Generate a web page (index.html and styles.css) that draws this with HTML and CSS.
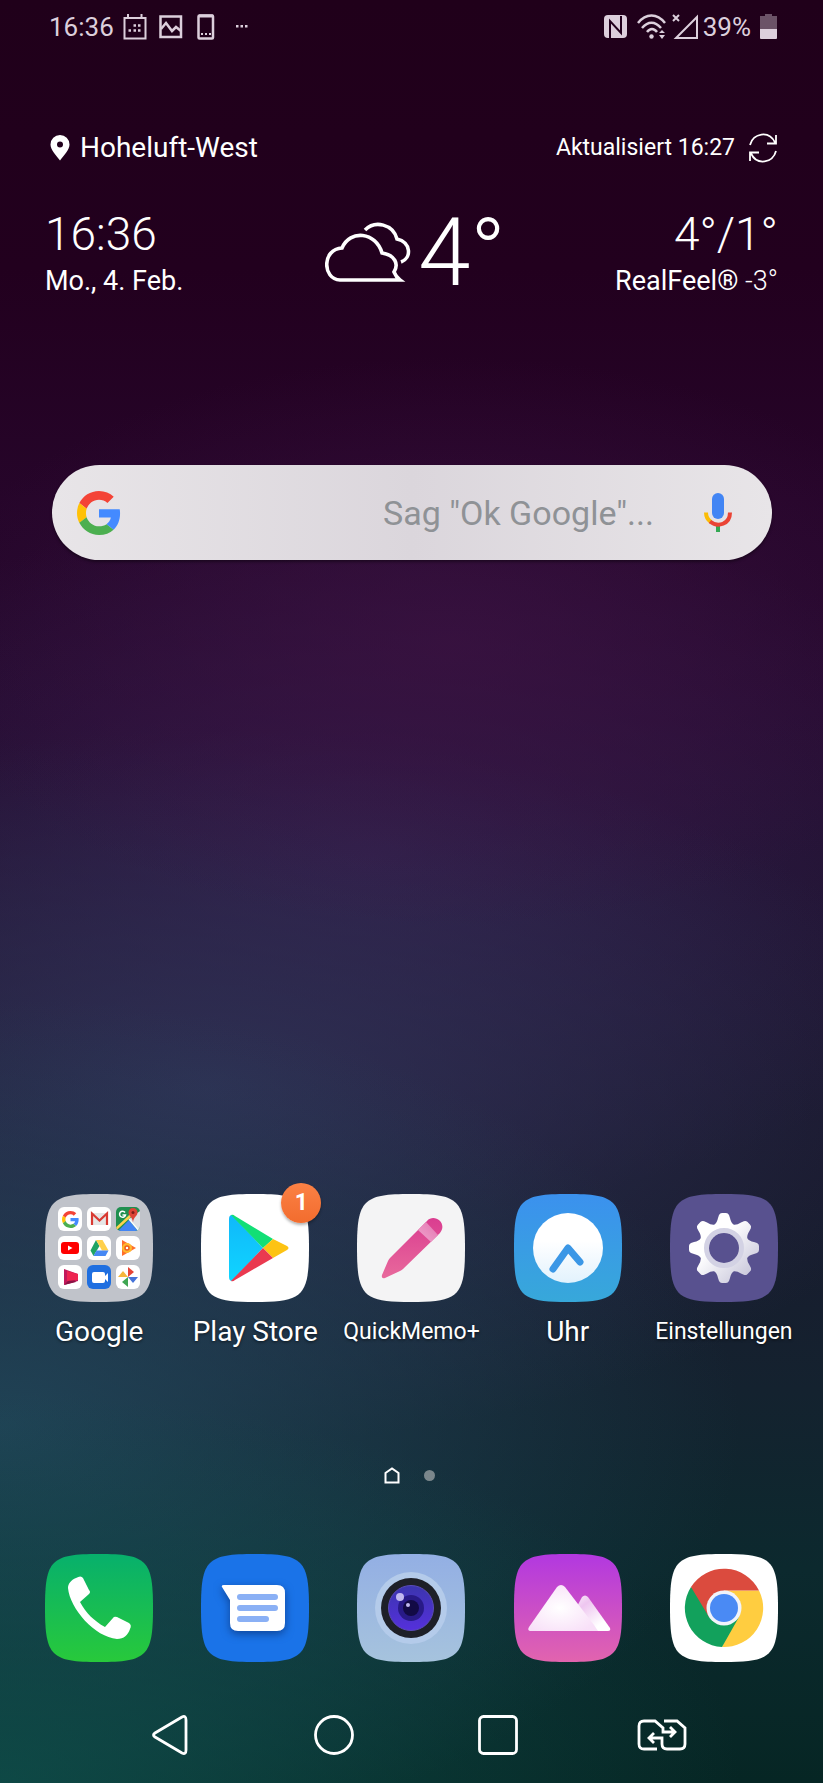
FILE: index.html
```html
<!DOCTYPE html>
<html lang="de">
<head>
    <meta charset="UTF-8">
    <meta name="viewport" content="width=device-width, initial-scale=1.0">
    <title>Startbildschirm</title>
    <link rel="stylesheet" href="styles.css">
</head>
<body>
<!-- Shared shapes -->
<svg class="defs" aria-hidden="true">
    <symbol id="tile" viewBox="0 0 108 108">
        <path d="M54 0C102 0 108 6 108 54S102 108 54 108 0 102 0 54 6 0 54 0Z"/>
    </symbol>
    <symbol id="google-g" viewBox="0 0 48 48">
        <path fill="#f44336" d="M24 9.5c3.54 0 6.71 1.22 9.21 3.6l6.85-6.85C35.9 2.38 30.47 0 24 0 14.62 0 6.51 5.38 2.56 13.22l7.98 6.19C12.43 13.72 17.74 9.5 24 9.5z"/>
        <path fill="#448aff" d="M46.98 24.55c0-1.57-.15-3.09-.38-4.55H24v9.02h12.94c-.58 2.96-2.26 5.48-4.78 7.18l7.73 6c4.51-4.18 7.09-10.36 7.09-17.65z"/>
        <path fill="#ffc107" d="M10.53 28.59c-.48-1.45-.76-2.99-.76-4.59s.27-3.14.76-4.59l-7.98-6.19C.92 16.46 0 20.12 0 24c0 3.88.92 7.54 2.56 10.78l7.97-6.19z"/>
        <path fill="#4caf50" d="M24 48c6.48 0 11.93-2.13 15.89-5.81l-7.73-6c-2.15 1.45-4.92 2.3-8.16 2.3-6.26 0-11.57-4.22-13.47-9.91l-7.98 6.19C6.51 42.62 14.62 48 24 48z"/>
    </symbol>
</svg>

<div class="screen">
    <header class="status-bar">
        <div class="status-left">
            <span>16:36</span>
            <svg class="calendar" width="24" height="26" viewBox="0 0 24 26" fill="none" stroke="currentColor" stroke-width="2">
                <path d="M1.500 4h21v20.500h-21zM5 0v4M18.500 0v4"/>
                <path stroke-width="2.500" d="M10.500 11.500h2.500M15 11.500h2.500M5.500 16.500h2.500M10.500 16.500h2.500M15 16.500h2.500"/>
            </svg>
            <svg class="picture" width="24" height="24" viewBox="0 0 24 24" fill="none" stroke="currentColor" stroke-width="2.500">
                <path d="M1.500 1.500h20.500v20.500H1.500z"/>
                <path d="M2 14l5-6 6 8 4-4 5 4"/>
            </svg>
            <svg class="phone-icon" width="18" height="26" viewBox="0 0 18 26" fill="none" stroke="currentColor">
                <rect x="1.500" y="1.500" width="14.500" height="23" rx="1" stroke-width="2.500"/>
                <path stroke-width="3" d="M2 2h14"/>
                <path stroke-width="2" d="M4 20h2M8 20h2M12 20h2"/>
            </svg>
            <svg class="more" width="12" height="4" viewBox="0 0 12 4" fill="currentColor">
                <path d="M0 0h2.500v2.500H0zM4.500 0H7v2.500H4.500zM9 0h2.500v2.500H9z"/>
            </svg>
        </div>
        <div class="status-right">
            <svg class="nfc" width="24" height="24" viewBox="0 0 24 24">
                <rect width="23" height="23" rx="4" fill="currentColor"/>
                <path d="M6 23V6l11 12V1" fill="none" stroke="#21001c" stroke-width="2"/>
            </svg>
            <svg width="30" height="26" viewBox="0 0 30 26" fill="none" stroke="currentColor" stroke-width="2.500">
                <path d="M1 9C9-1 20-1 28 9M5 14c6-7 13-7 19 0M10 18c3-4 7-4 10 0"/>
                <circle cx="14.500" cy="22.500" r="2.200" fill="currentColor" stroke="none"/>
                <path d="M22 19l3-3 3 3zM22 21l3 4 3-4z" fill="currentColor" stroke="none"/>
            </svg>
            <svg width="28" height="26" viewBox="0 0 28 26" fill="none" stroke="currentColor" stroke-width="2">
                <path d="M26 3v21H5zM2 1l6 6M8 1L2 7"/>
            </svg>
            <span>39%</span>
            <svg class="battery" width="18" height="26" viewBox="0 0 18 26" fill="currentColor">
                <path opacity=".4" d="M5 0h7v2h5v13H0V2h5z"/>
                <path d="M0 15h17v9a1 1 0 0 1-1 1H1a1 1 0 0 1-1-1z"/>
            </svg>
        </div>
    </header>

    <section class="weather">
        <div class="weather-top">
            <div class="location">
                <svg width="20" height="26" viewBox="0 0 20 26" fill="#fff">
                    <path fill-rule="evenodd" d="M10 0a9.500 9.500 0 0 1 9.500 9.500C19.500 15 14 20 10 25.500 6 20 .5 15 .5 9.500A9.500 9.500 0 0 1 10 0zm0 6.500a3 3 0 1 0 0 6 3 3 0 0 0 0-6z"/>
                </svg>
                <span>Hoheluft-West</span>
            </div>
            <div class="updated">
                <span>Aktualisiert 16:27</span>
                <button class="icon-button" aria-label="Aktualisieren">
                    <svg width="30" height="30" viewBox="0 0 30 30" fill="none" stroke="#fff" stroke-width="1.800">
                        <path d="M2 12C5 0 21-3 27 9.500M28 2v8.500h-9M28 18C25 30 9 33 3 20.500M2 28v-8.500h9"/>
                    </svg>
                </button>
            </div>
        </div>
        <div class="weather-main">
            <div class="clock">
                <div class="light">16:36</div>
                <div class="sub">Mo., 4. Feb.</div>
            </div>
            <div class="current">
                <svg width="86" height="62" viewBox="0 0 86 62" fill="none" stroke="#fff" stroke-width="3.600">
                    <path d="M15 58C-3 57-3 27 17 26C25 7 51 10 57 31C70 33 74 42 69 50Q71 55 75 58Z"/>
                    <path d="M40 8C50-2 68 2 72 17C86 20 87 36 76 40"/>
                </svg>
                <span class="temp">4°</span>
            </div>
            <div class="range">
                <div class="light">4°/1°</div>
                <div class="sub">RealFeel® <span class="feel">-3°</span></div>
            </div>
        </div>
    </section>

    <form class="search">
        <svg width="44" height="44" aria-hidden="true"><use href="#google-g"/></svg>
        <input type="text" placeholder='Sag "Ok Google"...' aria-label="Google Suche">
        <button type="button" class="icon-button" aria-label="Sprachsuche">
            <svg width="28" height="42" viewBox="0 0 28 42" fill="none" stroke-width="4">
                <rect x="8" y="1" width="12" height="26" rx="6" fill="#4285f4"/>
                <path stroke="#34a853" d="M14 33v7"/>
                <path stroke="#fbbc05" d="M2 20.500C2 25 4 28 7 30"/>
                <path stroke="#ea4335" d="M6 29.500C14 36 26 32 26 20.500"/>
            </svg>
        </button>
    </form>

    <main class="apps">
        <a href="#" class="app">
            <svg class="app-icon" viewBox="0 0 108 108">
                <use href="#tile" fill="#c0c3ca"/>
                <g fill="#fff">
                    <rect x="13" y="13" width="24" height="24" rx="6"/>
                    <rect x="42" y="13" width="24" height="24" rx="6"/>
                    <rect x="13" y="42" width="24" height="24" rx="6"/>
                    <rect x="42" y="42" width="24" height="24" rx="6"/>
                    <rect x="71" y="42" width="24" height="24" rx="6"/>
                    <rect x="13" y="71" width="24" height="24" rx="6"/>
                    <rect x="71" y="71" width="24" height="24" rx="6"/>
                </g>
                <use href="#google-g" x="17" y="17" width="17" height="17"/>
                <!-- Gmail -->
                <path fill="#e6e6e6" d="M46 19h16v12H46z"/>
                <path fill="none" stroke="#d93a32" stroke-width="2.200" d="M47 31V19.500l7.500 7 7.500-7V31"/>
                <!-- Maps -->
                <clipPath id="maps-clip"><rect x="71" y="13" width="24" height="24" rx="5"/></clipPath>
                <g clip-path="url(#maps-clip)">
                    <path fill="#1f8f4f" d="M71 13h24v24H71z"/>
                    <path fill="#dfe1e4" d="M84 25l11-8v20z"/>
                    <path fill="#4285f4" d="M73 37l11-11 9 11z"/>
                    <path stroke="#fdd34d" stroke-width="2.500" d="M70 36l14-13 4-4"/>
                    <path stroke="#fff" stroke-width="1.500" d="M84 25l11 13"/>
                    <path fill="none" stroke="#fff" stroke-width="1.500" d="M80 18.500a3 3 0 1 0 .5 2.500h-3"/>
                </g>
                <path fill="#dc4437" d="M88 14a4.500 4.500 0 0 1 4.500 4.500c0 4-4 4-4.500 10-.5-6-4.500-6-4.500-10A4.500 4.500 0 0 1 88 14z"/>
                <circle cx="88" cy="18.500" r="1.500" fill="#7d1e18"/>
                <!-- YouTube -->
                <rect x="16" y="48" width="18" height="12" rx="3" fill="#f00"/>
                <path fill="#fff" d="M23 51.500v5l4.500-2.500z"/>
                <!-- Drive -->
                <path fill="#1fa463" d="M51 46l3.500 6-6 10-3-5.500z"/>
                <path fill="#ffd04b" d="M51 46h6.500l6 10.500H57z"/>
                <path fill="#4688f4" d="M51.500 56.500h12l-3 5.500h-12z"/>
                <!-- Play Music -->
                <path fill="#ff6f2c" d="M77 46l14 8-14 8z"/>
                <circle cx="82" cy="54" r="5" fill="#ffb92e"/>
                <circle cx="82" cy="54" r="2" fill="#fff" stroke="#ef5b1e" stroke-width="1.500"/>
                <!-- Play Movies -->
                <path fill="#c2185b" d="M19 75l14 5v7l-14 4z"/>
                <path fill="#8a1245" d="M19 91l8-8 4 5z"/>
                <path fill="#ee2450" d="M22 77l11 3v6l-11 1z"/>
                <!-- Duo -->
                <rect x="42" y="71" width="24" height="24" rx="6" fill="#1f6fe0"/>
                <path fill="#fff" d="M49 78h9a2 2 0 0 1 2 2v2l3-3v9l-3-3v2a2 2 0 0 1-2 2h-9a2 2 0 0 1-2-2v-7a2 2 0 0 1 2-2z"/>
                <!-- Photos -->
                <path fill="#e54435" d="M83 73l6 5-6 5z"/>
                <path fill="#4472d8" d="M83 83h10l-5 6z"/>
                <path fill="#3fa652" d="M83 83v10l-6-5z"/>
                <path fill="#f6b73c" d="M83 83H73l5-6z"/>
            </svg>
            <span class="label">Google</span>
        </a>
        <a href="#" class="app">
            <svg class="app-icon" viewBox="0 0 108 108">
                <defs>
                    <linearGradient id="play-blue" x1="0" y1="0" x2="0" y2="1">
                        <stop offset="0" stop-color="#10b8fa"/>
                        <stop offset="1" stop-color="#10d5ff"/>
                    </linearGradient>
                </defs>
                <use href="#tile" fill="#fff"/>
                <path fill="url(#play-blue)" d="M31 21Q28 21 28 25V83Q28 87 31 87L62 54Z"/>
                <path fill="#12df76" d="M30 21Q32 20 34 22L72 45 62 54Z"/>
                <path fill="#fdc313" d="M72 45L86 52Q89 54 86 56L72 64 62 54Z"/>
                <path fill="#ea3a50" d="M30 87Q32 88 34 86L72 64 62 54Z"/>
            </svg>
            <span class="badge">1</span>
            <span class="label">Play Store</span>
        </a>
        <a href="#" class="app">
            <svg class="app-icon" viewBox="0 0 108 108">
                <defs>
                    <linearGradient id="pen" x1="0" y1="0" x2="0" y2="1">
                        <stop offset="0" stop-color="#da3d90"/>
                        <stop offset="1" stop-color="#e8699c"/>
                    </linearGradient>
                    <linearGradient id="pen-band" x1="1" y1="0" x2="0" y2="1">
                        <stop offset="0" stop-color="#e275b1"/>
                        <stop offset="1" stop-color="#f0a5cd"/>
                    </linearGradient>
                </defs>
                <use href="#tile" fill="#f4f4f5"/>
                <path fill="url(#pen)" d="M70 27C77 19 91 29 83 39L46 75Q45 76 43 77L28 84Q24 85 25 81L31 67Q32 65 33 64Z"/>
                <path fill="url(#pen-band)" d="M69 28L81 41 74 48 61 36Z"/>
            </svg>
            <span class="label label-long">QuickMemo+</span>
        </a>
        <a href="#" class="app">
            <svg class="app-icon" viewBox="0 0 108 108">
                <defs>
                    <linearGradient id="uhr-bg" x1="0" y1="0" x2="0" y2="1">
                        <stop offset="0" stop-color="#3b91ee"/>
                        <stop offset="1" stop-color="#37a8da"/>
                    </linearGradient>
                    <linearGradient id="uhr-face" x1="0" y1="0" x2="0" y2="1">
                        <stop offset=".4" stop-color="#fff"/>
                        <stop offset="1" stop-color="#e2f2fd"/>
                    </linearGradient>
                </defs>
                <use href="#tile" fill="url(#uhr-bg)"/>
                <circle cx="54" cy="54" r="35" fill="url(#uhr-face)"/>
                <path d="M39 75L54 54 66 68" fill="none" stroke="#3b97e6" stroke-width="7" stroke-linecap="round" stroke-linejoin="round"/>
            </svg>
            <span class="label">Uhr</span>
        </a>
        <a href="#" class="app">
            <svg class="app-icon" viewBox="0 0 108 108">
                <defs>
                    <linearGradient id="gear-fill" x1="0" y1="0" x2="1" y2="1">
                        <stop offset=".4" stop-color="#fff"/>
                        <stop offset="1" stop-color="#bcbad2"/>
                    </linearGradient>
                    <path id="tooth" d="M44 31Q47 29 48 24L49 21Q50 19 52 19H56Q58 19 59 21L60 24Q61 29 64 31L54 54Z"/>
                    <mask id="gear">
                        <g fill="#fff">
                            <circle cx="54" cy="54" r="24"/>
                            <use href="#tooth"/>
                            <use href="#tooth" transform="rotate(45 54 54)"/>
                            <use href="#tooth" transform="rotate(90 54 54)"/>
                            <use href="#tooth" transform="rotate(135 54 54)"/>
                            <use href="#tooth" transform="rotate(180 54 54)"/>
                            <use href="#tooth" transform="rotate(225 54 54)"/>
                            <use href="#tooth" transform="rotate(270 54 54)"/>
                            <use href="#tooth" transform="rotate(315 54 54)"/>
                        </g>
                        <circle cx="54" cy="54" r="15" fill="#000"/>
                    </mask>
                </defs>
                <use href="#tile" fill="#58518f"/>
                <g mask="url(#gear)">
                    <path fill="url(#gear-fill)" d="M19 19h70v70H19z"/>
                    <circle cx="54" cy="54" r="17.500" fill="none" stroke="#d3d2e4" stroke-width="5"/>
                </g>
            </svg>
            <span class="label label-long">Einstellungen</span>
        </a>
    </main>

    <div class="pages">
        <svg width="16" height="17" viewBox="0 0 16 17" fill="none" stroke="#fff" stroke-width="2">
            <path d="M1.500 15.500V6L8 1.500 14.500 6v9.500z"/>
        </svg>
        <span class="dot"></span>
    </div>

    <section class="dock">
        <a href="#" class="app" aria-label="Telefon">
            <svg class="app-icon" viewBox="0 0 108 108">
                <defs>
                    <linearGradient id="phone-bg" x1="0" y1="0" x2="0" y2="1">
                        <stop offset="0" stop-color="#07b06c"/>
                        <stop offset="1" stop-color="#28c93b"/>
                    </linearGradient>
                </defs>
                <use href="#tile" fill="url(#phone-bg)"/>
                <path fill="#fff" d="M31 24Q36 21 38 24L44 36Q46 38 44 40L35 48C41 59 49 67 60 73L68 64Q69 62 72 63L84 69Q87 71 85 75C83 81 79 85 72 85C50 83 25 55 23 34C23 30 26 26 31 24Z"/>
            </svg>
        </a>
        <a href="#" class="app" aria-label="Nachrichten">
            <svg class="app-icon" viewBox="0 0 108 108">
                <use href="#tile" fill="#1a73e8"/>
                <path class="bubble" fill="#fff" d="M23 31H76Q84 31 84 39V69Q84 77 76 77H37Q29 77 29 69V46L21 33Q20 31 23 31Z"/>
                <path fill="none" stroke="#8ab0f5" stroke-width="6" stroke-linecap="round" d="M39 43H74M39 54H74M39 65H65"/>
            </svg>
        </a>
        <a href="#" class="app" aria-label="Kamera">
            <svg class="app-icon" viewBox="0 0 108 108">
                <defs>
                    <linearGradient id="cam-bg" x1="0" y1="0" x2="0" y2="1">
                        <stop offset="0" stop-color="#93afe4"/>
                        <stop offset="1" stop-color="#a6c3dd"/>
                    </linearGradient>
                    <linearGradient id="lens" x1="0" y1="0" x2="0" y2="1">
                        <stop offset="0" stop-color="#3b35ae"/>
                        <stop offset="1" stop-color="#5530dc"/>
                    </linearGradient>
                </defs>
                <use href="#tile" fill="url(#cam-bg)"/>
                <circle cx="54" cy="54" r="36" fill="#b4cbea"/>
                <circle cx="54" cy="54" r="30" fill="#1e2028"/>
                <circle cx="54" cy="54" r="22.500" fill="url(#lens)" stroke="#5a4bb8"/>
                <circle cx="54" cy="54" r="13" fill="#281a87"/>
                <circle cx="54" cy="54" r="8" fill="#120a45"/>
                <circle cx="43" cy="43" r="4" fill="#c1b9f0"/>
                <circle cx="51" cy="51" r="2" fill="#c1b9f0"/>
            </svg>
        </a>
        <a href="#" class="app" aria-label="Galerie">
            <svg class="app-icon" viewBox="0 0 108 108">
                <defs>
                    <linearGradient id="gal-bg" x1="0" y1="0" x2="0" y2="1">
                        <stop offset="0" stop-color="#b238e0"/>
                        <stop offset="1" stop-color="#e264ae"/>
                    </linearGradient>
                    <linearGradient id="peak" x1="0" y1="0" x2="1" y2="1">
                        <stop offset="0" stop-color="#fff"/>
                        <stop offset=".35" stop-color="#eec6f0"/>
                        <stop offset=".8" stop-color="#fff"/>
                    </linearGradient>
                    <radialGradient id="mountain" cx=".45" cy=".5" r=".6">
                        <stop offset="0" stop-color="#fff"/>
                        <stop offset="1" stop-color="#f8e0f8"/>
                    </radialGradient>
                </defs>
                <use href="#tile" fill="url(#gal-bg)"/>
                <path fill="url(#peak)" d="M50 77L68 43Q71 40 74 43L96 74Q97 77 94 77Z"/>
                <path fill="url(#mountain)" d="M16 77Q13 76 15 73L43 33Q47 29 51 33L80 71 84 77Z"/>
            </svg>
        </a>
        <a href="#" class="app" aria-label="Chrome">
            <svg class="app-icon" viewBox="0 0 108 108">
                <use href="#tile" fill="#fff"/>
                <path fill="#ffcd40" d="M54 36.500H89A39 39 0 0 1 52 93L69 54Z"/>
                <path fill="#12a15c" d="M54 54L69 63 52 93A39 39 0 0 1 21 33Z"/>
                <path fill="#db4b3e" d="M39 63L21 33A39 39 0 0 1 89 36.500H54Z"/>
                <circle cx="54" cy="54" r="17.500" fill="#f1f3fa"/>
                <circle cx="54" cy="54" r="14" fill="#4a8af4"/>
            </svg>
        </a>
    </section>

    <nav class="nav-bar">
        <button class="icon-button" aria-label="Zurück">
            <svg width="42" height="42" viewBox="0 0 42 42" fill="none" stroke="#fff" stroke-width="2.800">
                <path d="M33 3Q37 1 37 6V36Q37 41 33 39L6 23Q3 21 6 19Z"/>
            </svg>
        </button>
        <button class="icon-button" aria-label="Startseite">
            <svg width="42" height="42" viewBox="0 0 42 42" fill="none" stroke="#fff" stroke-width="2.800">
                <circle cx="21" cy="21" r="18.500"/>
            </svg>
        </button>
        <button class="icon-button" aria-label="Letzte Apps">
            <svg width="42" height="42" viewBox="0 0 42 42" fill="none" stroke="#fff" stroke-width="2.800">
                <rect x="2.500" y="2.500" width="37" height="37" rx="4"/>
            </svg>
        </button>
        <button class="icon-button" aria-label="Wechseln">
            <svg width="50" height="32" viewBox="0 0 50 32" fill="none" stroke="#fff" stroke-width="2.800">
                <path d="M20 30H7Q2 30 2 25V7Q2 2 7 2H18L26 9V13H38M33 8l5 5-5 5"/>
                <path d="M27 2H40L48 9V25Q48 30 43 30H30Q25 30 25 25V19H12M17 14l-5 5 5 5"/>
            </svg>
        </button>
    </nav>
</div>
</body>
</html>
```
FILE: styles.css
```css
* {
    margin: 0;
    padding: 0;
    box-sizing: border-box;
}

body {
    font-family: Roboto, sans-serif;
    color: #fff;
}

.defs {
    display: block;
    width: 0;
    height: 0;
}

svg {
    display: block;
    flex: none;
}

a {
    color: inherit;
    text-decoration: none;
}

.icon-button {
    background: none;
    border: none;
    cursor: pointer;
}

/* Wallpaper is built from stacked gradients */
.screen {
    display: flex;
    flex-direction: column;
    min-height: 100vh;
    background:
        radial-gradient(ellipse 90% 22% at 0% 100%, rgba(15, 80, 76, 0.8), rgba(15, 80, 76, 0)),
        radial-gradient(ellipse 90% 24% at 0% 80%, rgba(34, 72, 92, 0.85), rgba(34, 72, 92, 0)),
        radial-gradient(ellipse 65% 16% at 55% 36%, rgba(60, 18, 66, 0.7), rgba(60, 18, 66, 0)),
        radial-gradient(ellipse 90% 20% at 25% 61%, rgba(48, 52, 88, 0.85), rgba(48, 52, 88, 0)),
        radial-gradient(ellipse 80% 20% at 45% 48%, rgba(56, 34, 84, 0.7), rgba(56, 34, 84, 0)),
        linear-gradient(180deg, #20001a 0%, #22001e 15%, #26052a 28%, #240a2e 40%, #1e1430 52%, #191a2e 66%, #14222f 78%, #0c292e 88%, #062624 100%);
}

/* Status bar */
.status-bar {
    display: flex;
    justify-content: space-between;
    align-items: center;
    height: 53px;
    padding: 0 45px 0 49px;
    font-size: 26px;
    color: #dccfdc;
}

.status-left,
.status-right {
    display: flex;
    align-items: center;
}

.status-left {
    gap: 9px;
}

.picture {
    margin-left: 3px;
}

.phone-icon {
    margin-left: 5px;
}

.more {
    margin-left: 12px;
}

.status-right {
    gap: 4px;
}

.nfc {
    margin-right: 5px;
}

.battery {
    margin-left: 5px;
}

/* Weather widget */
.weather {
    padding: 78px 45px 0;
}

.weather-top,
.weather-main {
    display: flex;
    justify-content: space-between;
    align-items: center;
}

.location,
.updated {
    display: flex;
    align-items: center;
}

.location {
    gap: 10px;
    padding-left: 5px;
    font-size: 28px;
}

.updated {
    gap: 13px;
    font-size: 23px;
}

.weather-main {
    display: grid;
    grid-template-columns: 1fr auto 1fr;
    margin-top: 41px;
}

.light {
    font-size: 46px;
    font-weight: 300;
    line-height: 56px;
}

.sub {
    font-size: 27px;
    line-height: 38px;
}

.feel {
    font-weight: 300;
}

.range {
    text-align: right;
}

.current {
    display: flex;
    align-items: center;
    gap: 7px;
    padding-left: 8px;
}

.temp {
    font-size: 94px;
    font-weight: 300;
    line-height: 96px;
}

/* Search */
.search {
    display: flex;
    align-items: center;
    height: 95px;
    margin: 164px 51px 0 52px;
    padding: 0 40px 0 25px;
    border-radius: 48px;
    background: linear-gradient(90deg, #e8e5e8, #dbd6dc 50%, #e8e5e8);
    box-shadow: 0 2px 3px rgba(0, 0, 0, 0.4);
}

.search input {
    flex: 1;
    min-width: 0;
    padding: 0 50px 0 20px;
    border: none;
    outline: none;
    background: none;
    font-family: inherit;
    font-size: 34px;
    text-align: right;
    color: #55585c;
}

.search input::placeholder {
    color: #8f9296;
    opacity: 1;
}

/* App grid and dock */
.apps,
.dock {
    display: grid;
    grid-template-columns: repeat(5, 1fr);
    padding: 0 21px;
}

.apps {
    margin-top: auto;
}

.app {
    position: relative;
    display: flex;
    flex-direction: column;
    align-items: center;
}

.app-icon {
    width: 108px;
    height: 108px;
}

.label {
    margin-top: 11px;
    font-size: 28px;
    line-height: 38px;
    text-shadow: 0 1px 3px rgba(0, 0, 0, 0.6);
}

.label-long {
    font-size: 23px;
}

.badge {
    position: absolute;
    top: -11px;
    right: 12px;
    width: 40px;
    height: 40px;
    border-radius: 50%;
    background: linear-gradient(#fb8145, #f26c2e);
    box-shadow: 0 2px 3px rgba(0, 0, 0, 0.3);
    font-size: 23px;
    font-weight: 700;
    line-height: 40px;
    text-align: center;
}

.pages {
    display: flex;
    justify-content: center;
    align-items: center;
    gap: 24px;
    padding: 116px 4px 70px 0;
}

.dot {
    width: 11px;
    height: 11px;
    border-radius: 50%;
    background: #7b878c;
}

.bubble {
    filter: drop-shadow(0 3px 4px rgba(8, 50, 120, 0.7));
}

/* Navigation */
.nav-bar {
    display: grid;
    grid-template-columns: repeat(4, 1fr);
    align-items: center;
    justify-items: center;
    padding: 52px 79px 27px 88px;
}
```
